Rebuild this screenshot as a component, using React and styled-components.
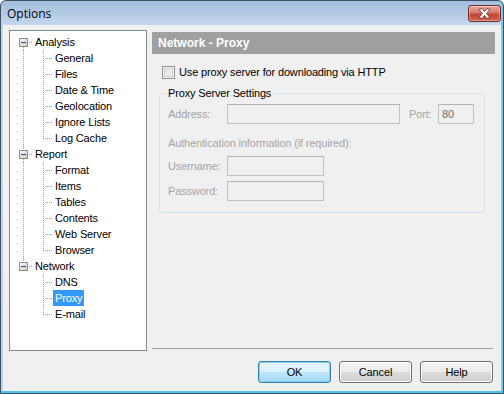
import React from 'react';
import styled, { createGlobalStyle } from 'styled-components';

const Global = createGlobalStyle`
    body {
        margin: 0;
        background: #ffffff;
        font-family: "Liberation Sans", Arial, sans-serif;
        font-size: 11px;
        letter-spacing: -0.15px;
    }
`

const Window = styled.div`
    width: 504px;
    height: 394px;
    box-sizing: border-box;
    border: 1px solid #3d4f63;
    border-radius: 6px 6px 0 0;
    background: linear-gradient(to bottom, #a3bedc 0px, #c3d7ec 24px, #bcd3ea 100%);
    box-shadow: inset 0 -2px 0 #4fc3ea, inset -2px 0 0 #7cc9ea;
    display: flex;
    flex-direction: column;
    overflow: hidden;
`

const TitleBar = styled.div`
    height: 24px;
    display: flex;
    align-items: flex-start;
    justify-content: space-between;
    padding: 0 2px 0 6px;
`

const Title = styled.div`
    font-family: "Open Sans", "Liberation Sans", sans-serif;
    font-size: 12px;
    letter-spacing: 0;
    color: #000;
    line-height: 26px;
`

const CloseButton = styled.div`
    margin-top: 4px;
    width: 33px;
    height: 17px;
    box-sizing: border-box;
    border: 1px solid #6e2a24;
    border-radius: 3px;
    background: linear-gradient(to bottom, #e8a89d 0%, #d77a6c 45%, #c24434 55%, #d5614f 100%);
    box-shadow: inset 0 0 0 1px rgba(255, 255, 255, 0.35);
    display: flex;
    align-items: center;
    justify-content: center;
`

const Body = styled.div`
    flex: 1;
    margin: 0 2px 2px 2px;
    background: #f0f0f0;
    padding: 5px 6px 8px 6px;
    display: flex;
    flex-direction: column;
`

const Main = styled.div`
    height: 321px;
    display: flex;
    gap: 5px;
`

const Tree = styled.div`
    width: 138px;
    box-sizing: border-box;
    border: 1px solid #828790;
    background: #ffffff;
    padding: 3px 0 0 3px;
`

const Row = styled.div`
    height: 16px;
    display: flex;
    align-items: center;
`

const Label = styled.span`
    padding: 0 2px;
    line-height: 16px;
    color: ${p => (p.$selected ? '#ffffff' : '#000000')};
    background: ${p => (p.$selected ? '#3399ff' : 'transparent')};
`

const Right = styled.div`
    flex: 1;
    display: flex;
    flex-direction: column;
    padding-top: 2px;
`

const Header = styled.div`
    height: 22px;
    background: #a0a0a0;
    color: #ffffff;
    font-weight: bold;
    font-size: 12px;
    letter-spacing: 0;
    line-height: 22px;
    padding-left: 6px;
`

const CheckRow = styled.label`
    margin: 10px 0 0 10px;
    height: 16px;
    display: flex;
    align-items: center;
    gap: 4px;
    color: #000;
`

const Box = styled.span`
    width: 13px;
    height: 13px;
    box-sizing: border-box;
    border: 1px solid #8e8f8f;
    background: linear-gradient(135deg, #dcdcdc, #f6f6f6);
    box-shadow: inset 0 0 0 1px #f4f4f4, inset 0 0 0 2px #d0d0d0;
`

const Group = styled.fieldset`
    margin: 7px 10px 0 7px;
    padding: 3px 8px 11px 8px;
    border: 1px solid #d5dfe5;
    border-radius: 3px;
    min-width: 0;
`

const Legend = styled.legend`
    padding: 0 2px;
    margin-left: -2px;
    color: #000;
`

const FieldRow = styled.div`
    display: flex;
    align-items: center;
    margin-top: ${p => p.$top || 0}px;
`

const Muted = styled.span`
    color: #a3a3a3;
    width: ${p => (p.$w ? `${p.$w}px` : 'auto')};
    margin-left: ${p => p.$gap || 0}px;
    flex: none;
`

const Input = styled.div`
    width: ${p => p.$w}px;
    height: 20px;
    box-sizing: border-box;
    border: 1px solid #c2c2c2;
    border-top-color: #b3b3b3;
    background: #f0f0f0;
    color: #6d6d6d;
    padding-left: 3px;
    line-height: 18px;
    flex: none;
`

const Spacer = styled.div`
    flex: 1;
`

const Separator = styled.div`
    height: 1px;
    background: #a0a0a0;
    margin: 0 2px 2px 0;
`

const Buttons = styled.div`
    margin-top: 10px;
    display: flex;
    justify-content: flex-end;
    gap: 8px;
    padding-right: 2px;
`

const Button = styled.div`
    width: 73px;
    height: 22px;
    box-sizing: border-box;
    border: 1px solid ${p => (p.$default ? '#3c7fb1' : '#707070')};
    border-radius: 3px;
    background: ${p => (p.$default
        ? 'linear-gradient(to bottom, #eaf6fd 0%, #d9f0fc 50%, #bee6fd 51%, #a7d9f5 100%)'
        : 'linear-gradient(to bottom, #f2f2f2 0%, #ebebeb 50%, #dddddd 51%, #cfcfcf 100%)')};
    box-shadow: inset 0 0 0 1px ${p => (p.$default ? '#7ad2f5' : '#fcfcfc')};
    display: flex;
    align-items: center;
    justify-content: center;
    color: #000;
`

const dot = { stroke: '#a0a0a0', strokeDasharray: '1 1', shapeRendering: 'crispEdges' };

const RootCell = ({ first, last }) => (
    <svg width="20" height="16" style={{ flex: 'none' }}>
        {!first && <line x1="10.5" y1="0" x2="10.5" y2="4" style={dot} />}
        {!last && <line x1="10.5" y1="13" x2="10.5" y2="16" style={dot} />}
        <line x1="16" y1="8.5" x2="20" y2="8.5" style={dot} />
        <defs>
            <linearGradient id="exp" x1="0" y1="0" x2="1" y2="1">
                <stop offset="0" stopColor="#ffffff" />
                <stop offset="1" stopColor="#c8c8c8" />
            </linearGradient>
        </defs>
        <rect x="6.5" y="4.5" width="8" height="8" fill="url(#exp)" stroke="#8e8f8f" shapeRendering="crispEdges" />
        <line x1="8" y1="8.5" x2="13" y2="8.5" stroke="#2b4c91" shapeRendering="crispEdges" />
    </svg>
)

const LineCell = ({ show }) => (
    <svg width="20" height="16" style={{ flex: 'none' }}>
        {show && <line x1="10.5" y1="0" x2="10.5" y2="16" style={dot} />}
    </svg>
)

const BranchCell = ({ last }) => (
    <svg width="20" height="16" style={{ flex: 'none' }}>
        <line x1="10.5" y1="0" x2="10.5" y2={last ? 9 : 16} style={dot} />
        <line x1="12" y1="8.5" x2="20" y2="8.5" style={dot} />
    </svg>
)

const tree = [
    { name: 'Analysis', children: ['General', 'Files', 'Date & Time', 'Geolocation', 'Ignore Lists', 'Log Cache'] },
    { name: 'Report', children: ['Format', 'Items', 'Tables', 'Contents', 'Web Server', 'Browser'] },
    { name: 'Network', children: ['DNS', 'Proxy', 'E-mail'] },
]

const App = () => {
    return (
        <>
            <Global />
            <Window>
                <TitleBar>
                    <Title>Options</Title>
                    <CloseButton>
                        <svg width="13" height="11" viewBox="0 0 13 11">
                            <path d="M1 1.5 L4 0.5 L6.5 3.5 L9 0.5 L12 1.5 L8.5 5.5 L12 9.5 L9 10.5 L6.5 7.5 L4 10.5 L1 9.5 L4.5 5.5 Z"
                                fill="#ffffff" stroke="#5a2a26" strokeWidth="0.8" strokeLinejoin="round" />
                        </svg>
                    </CloseButton>
                </TitleBar>
                <Body>
                    <Main>
                        <Tree>
                            {tree.map((root, ri) => (
                                <React.Fragment key={root.name}>
                                    <Row>
                                        <RootCell first={ri === 0} last={ri === tree.length - 1} />
                                        <Label>{root.name}</Label>
                                    </Row>
                                    {root.children.map((c, ci) => (
                                        <Row key={c}>
                                            <LineCell show={ri !== tree.length - 1} />
                                            <BranchCell last={ci === root.children.length - 1} />
                                            <Label $selected={c === 'Proxy'}>{c}</Label>
                                        </Row>
                                    ))}
                                </React.Fragment>
                            ))}
                        </Tree>
                        <Right>
                            <Header>Network - Proxy</Header>
                            <CheckRow>
                                <Box />
                                Use proxy server for downloading via HTTP
                            </CheckRow>
                            <Group>
                                <Legend>Proxy Server Settings</Legend>
                                <FieldRow $top={2}>
                                    <Muted $w={59}>Address:</Muted>
                                    <Input $w={173} />
                                    <Muted $w={29} $gap={9}>Port:</Muted>
                                    <Input $w={36}>80</Input>
                                </FieldRow>
                                <FieldRow $top={13}>
                                    <Muted>Authentication information (if required):</Muted>
                                </FieldRow>
                                <FieldRow $top={7}>
                                    <Muted $w={59}>Username:</Muted>
                                    <Input $w={97} />
                                </FieldRow>
                                <FieldRow $top={5}>
                                    <Muted $w={59}>Password:</Muted>
                                    <Input $w={97} />
                                </FieldRow>
                            </Group>
                            <Spacer />
                            <Separator />
                        </Right>
                    </Main>
                    <Buttons>
                        <Button $default>OK</Button>
                        <Button>Cancel</Button>
                        <Button>Help</Button>
                    </Buttons>
                </Body>
            </Window>
        </>
    )
}

export default App
